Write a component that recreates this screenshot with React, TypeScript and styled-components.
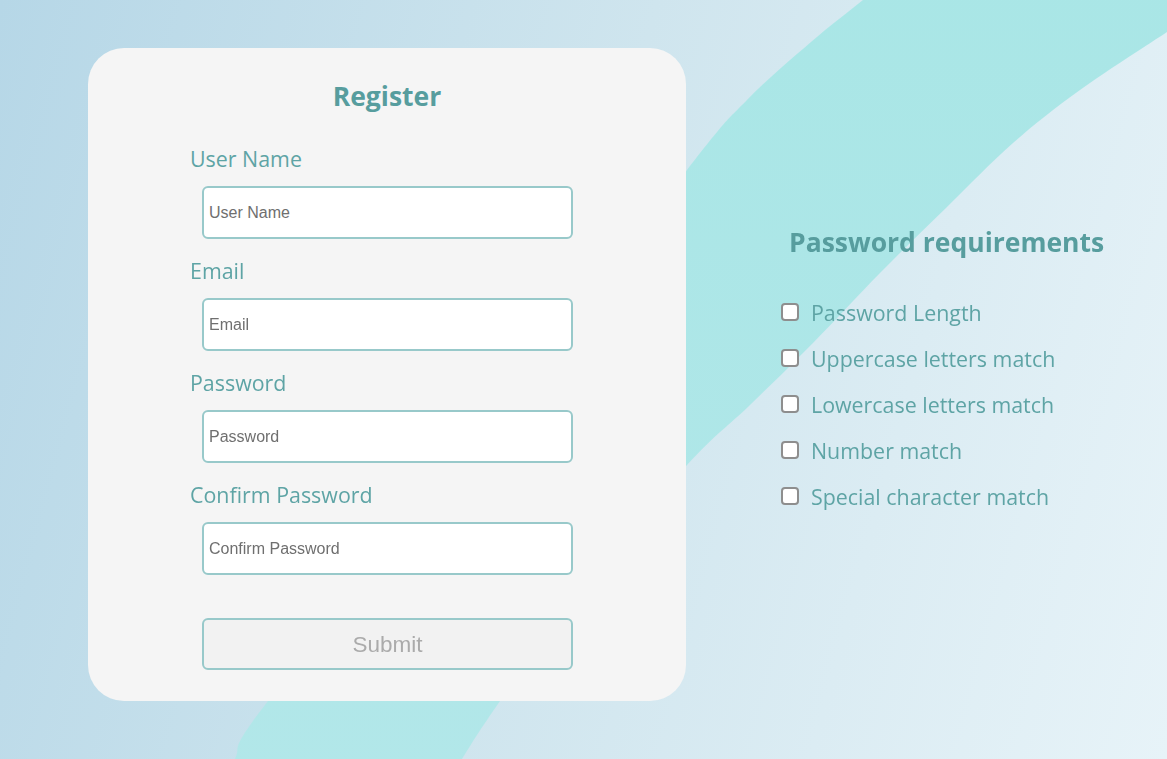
import React from "react";
import styled, { createGlobalStyle } from "styled-components";

const GlobalStyle = createGlobalStyle`
  html, body { margin: 0; padding: 0; }
  body {
    min-height: 100vh;
    background: linear-gradient(105deg, #b6d7e7 0%, #cfe5ee 48%, #e7f3f8 100%);
    font-family: "Open Sans", "Noto Sans", sans-serif;
    overflow: hidden;
  }
`;

const Backdrop = styled.svg`
  position: fixed;
  inset: 0;
  width: 100%;
  height: 100%;
  z-index: 0;
  pointer-events: none;
`;

const Page = styled.main`
  position: relative;
  z-index: 1;
  display: flex;
  align-items: flex-start;
  padding: 48px 0 0 88px;
  height: 759px;
  box-sizing: border-box;
`;

const Card = styled.section`
  width: 598px;
  height: 653px;
  box-sizing: border-box;
  background: #f5f5f5;
  border-radius: 36px;
  padding-top: 30px;
  display: flex;
  flex-direction: column;
`;

const Title = styled.h1`
  margin: 0;
  text-align: center;
  font-size: 26.5px;
  line-height: 36px;
  font-weight: 700;
  color: #579d9e;
`;

const Form = styled.form`
  display: flex;
  flex-direction: column;
  padding: 31px 0 0 102px;
`;

const Field = styled.div`
  display: flex;
  flex-direction: column;
  margin-bottom: 18px;
`;

const Label = styled.label`
  font-size: 21.4px;
  line-height: 28px;
  color: #5ea4a5;
  margin-bottom: 13px;
`;

const Input = styled.input`
  margin-left: 12px;
  width: 371px;
  height: 53px;
  box-sizing: border-box;
  border: 2px solid #98c9ca;
  border-radius: 6px;
  background: #ffffff;
  padding: 0 5px;
  font-family: "Liberation Sans", Arial, sans-serif;
  font-size: 16px;
  color: #333;
  outline: none;
  &::placeholder { color: #6f6f6f; }
`;

const Submit = styled.button`
  margin: 25px 0 0 12px;
  width: 371px;
  height: 52px;
  box-sizing: border-box;
  border: 2px solid #98c9ca;
  border-radius: 6px;
  background: #f2f2f2;
  padding-top: 2px;
  font-family: "Liberation Sans", Arial, sans-serif;
  font-size: 22.5px;
  color: #ababab;
`;

const Requirements = styled.aside`
  display: flex;
  flex-direction: column;
  margin: 176px 0 0 95px;
`;

const ReqTitle = styled.h2`
  margin: 0 0 38px 8px;
  font-size: 26.5px;
  line-height: 36px;
  font-weight: 700;
  color: #579d9e;
`;

const ReqList = styled.ul`
  list-style: none;
  margin: 0;
  padding: 0;
  display: flex;
  flex-direction: column;
  gap: 18px;
`;

const ReqItem = styled.li`
  display: flex;
  align-items: center;
  gap: 12px;
  height: 28px;
  font-size: 21.4px;
  color: #5ea4a5;
`;

const Check = styled.input`
  appearance: none;
  margin: 0;
  width: 18px;
  height: 18px;
  box-sizing: border-box;
  border: 2px solid #8e8e8e;
  border-radius: 4px;
  background: #ffffff;
`;

type Pt = [number, number];

function smoothPath(points: Pt[]): string {
  let d = `M ${points[0][0]} ${points[0][1]}`;
  for (let i = 0; i < points.length - 1; i++) {
    const p0 = points[Math.max(0, i - 1)];
    const p1 = points[i];
    const p2 = points[i + 1];
    const p3 = points[Math.min(points.length - 1, i + 2)];
    const c1: Pt = [p1[0] + (p2[0] - p0[0]) / 6, p1[1] + (p2[1] - p0[1]) / 6];
    const c2: Pt = [p2[0] - (p3[0] - p1[0]) / 6, p2[1] - (p3[1] - p1[1]) / 6];
    d += ` C ${c1[0].toFixed(1)} ${c1[1].toFixed(1)} ${c2[0].toFixed(1)} ${c2[1].toFixed(1)} ${p2[0]} ${p2[1]}`;
  }
  return d;
}

const leftEdge: Pt[] = [
  [900, -30], [863, 0], [811, 42], [747, 100], [687, 170], [490, 430], [268, 701], [235, 759], [222, 790],
];
const rightEdge: Pt[] = [
  [1240, -16], [1167, 32], [1080, 90], [1013, 143], [947, 207], [880, 273], [813, 343], [750, 405],
  [687, 465], [580, 590], [500, 701], [462, 759], [445, 790],
];

function bandPath(): string {
  const l = smoothPath(leftEdge);
  const r = smoothPath([...rightEdge].reverse()).replace(/^M/, "L");
  return `${l} ${r} Z`;
}

const requirements = [
  "Password Length",
  "Uppercase letters match",
  "Lowercase letters match",
  "Number match",
  "Special character match",
];

const fields = ["User Name", "Email", "Password", "Confirm Password"];

export default function App() {
  return (
    <>
      <GlobalStyle />
      <Backdrop viewBox="0 0 1167 759" preserveAspectRatio="none">
        <defs>
          <linearGradient id="band" x1="0" y1="0" x2="0" y2="1">
            <stop offset="0" stopColor="#a9e6e6" />
            <stop offset="1" stopColor="#b2e7e9" />
          </linearGradient>
        </defs>
        <path d={bandPath()} fill="url(#band)" />
      </Backdrop>
      <Page>
        <Card>
          <Title>Register</Title>
          <Form onSubmit={(e) => e.preventDefault()}>
            {fields.map((f) => (
              <Field key={f}>
                <Label>{f}</Label>
                <Input
                  type={f.includes("Password") ? "password" : f === "Email" ? "email" : "text"}
                  placeholder={f}
                />
              </Field>
            ))}
            <Submit type="submit" disabled>
              Submit
            </Submit>
          </Form>
        </Card>
        <Requirements>
          <ReqTitle>Password requirements</ReqTitle>
          <ReqList>
            {requirements.map((r) => (
              <ReqItem key={r}>
                <Check type="checkbox" />
                <span>{r}</span>
              </ReqItem>
            ))}
          </ReqList>
        </Requirements>
      </Page>
    </>
  );
}
